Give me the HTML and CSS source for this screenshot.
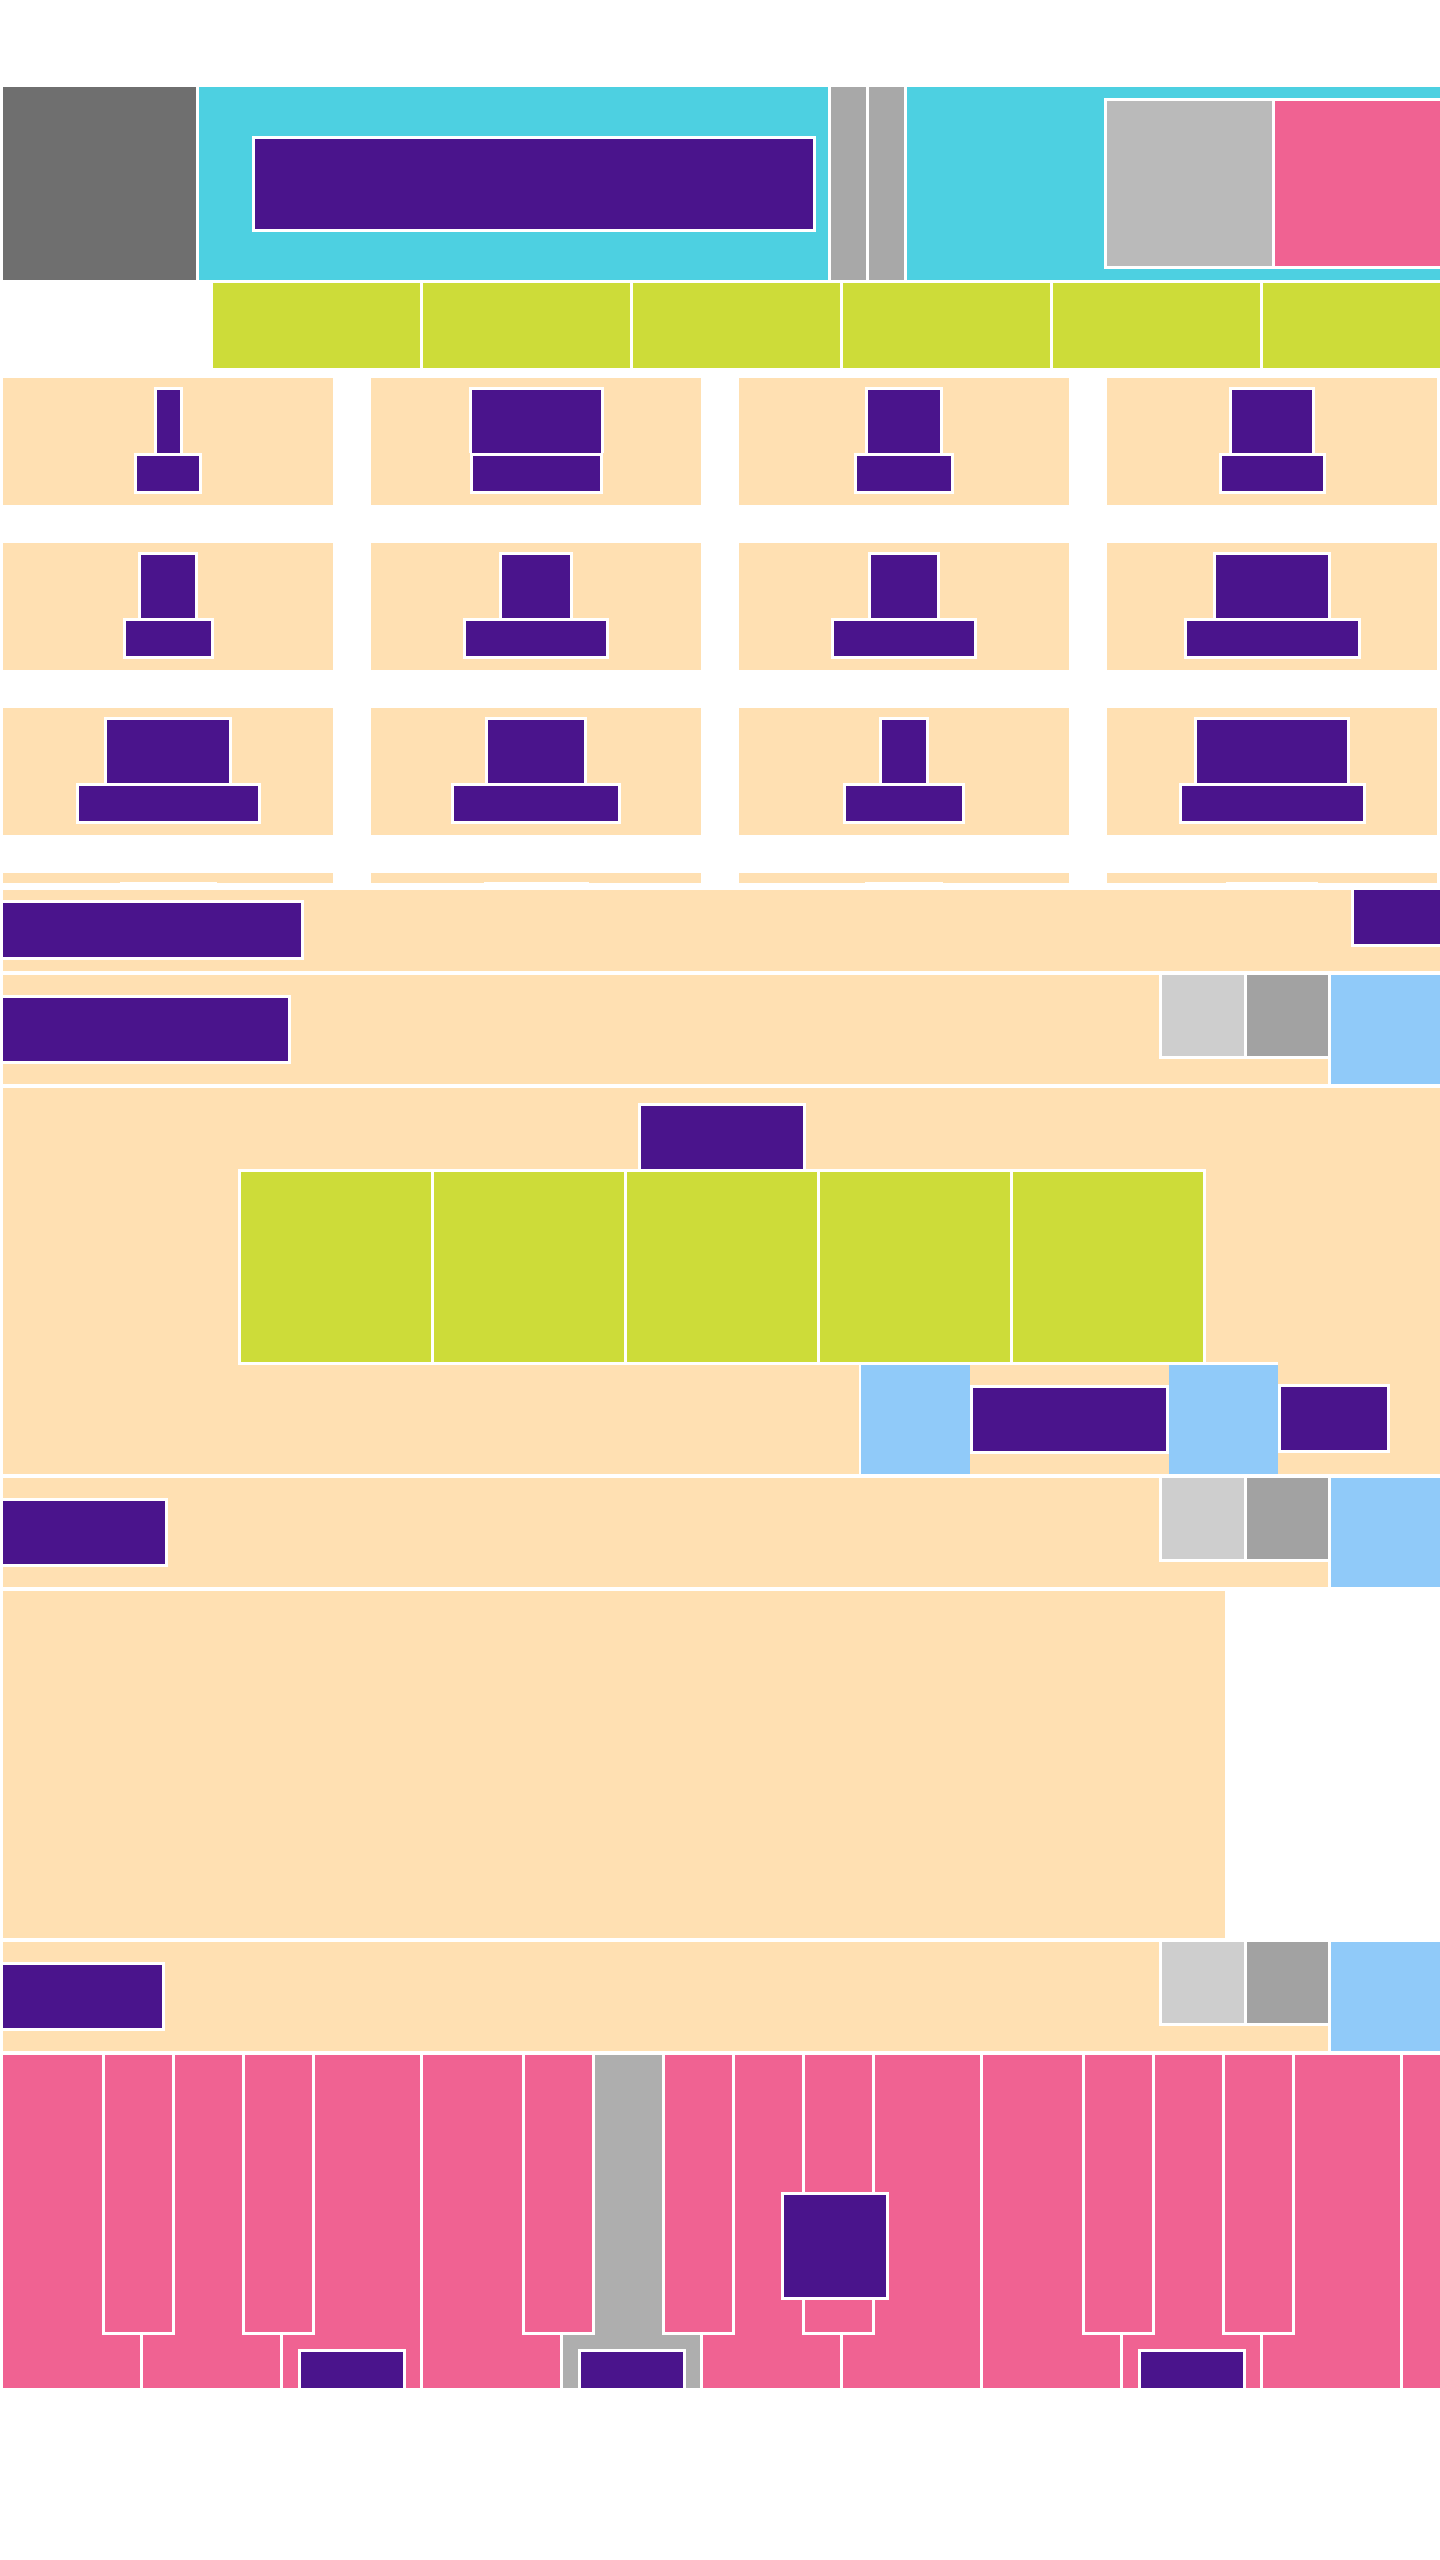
FILE: index.html
```html
<!DOCTYPE html>
<html lang="en">
    <head>
        <meta charset="UTF-8">
        <title>Layout</title>
        <link rel="stylesheet" href="styles.css">
    </head>
    <body>
        <div id="page">
            <div id="topbar">
                <div class="logo"></div>
                <div class="hero"><div class="banner"></div></div>
                <div class="bar"></div>
                <div class="bar"></div>
                <div class="hero hero-side">
                    <div class="inset">
                        <div class="inset-gray"></div>
                        <div class="inset-pink"></div>
                    </div>
                </div>
            </div>
            <ul id="tabs">
                <li></li><li></li><li></li><li></li><li></li><li></li>
            </ul>
            <div id="cards">
                <div class="card"><div class="stem" style="width:29px"></div><div class="base" style="width:68px"></div></div>
                <div class="card"><div class="stem" style="width:135px"></div><div class="base" style="width:133px"></div></div>
                <div class="card"><div class="stem" style="width:78px"></div><div class="base" style="width:100px"></div></div>
                <div class="card"><div class="stem" style="width:86px"></div><div class="base" style="width:107px"></div></div>

                <div class="card"><div class="stem" style="width:60px"></div><div class="base" style="width:91px"></div></div>
                <div class="card"><div class="stem" style="width:74px"></div><div class="base" style="width:146px"></div></div>
                <div class="card"><div class="stem" style="width:72px"></div><div class="base" style="width:146px"></div></div>
                <div class="card"><div class="stem" style="width:118px"></div><div class="base" style="width:177px"></div></div>

                <div class="card"><div class="stem" style="width:128px"></div><div class="base" style="width:185px"></div></div>
                <div class="card"><div class="stem" style="width:102px"></div><div class="base" style="width:170px"></div></div>
                <div class="card"><div class="stem" style="width:50px"></div><div class="base" style="width:122px"></div></div>
                <div class="card"><div class="stem" style="width:156px"></div><div class="base" style="width:187px"></div></div>

                <div class="card"><div class="stem" style="width:97px"></div><div class="base" style="width:130px"></div></div>
                <div class="card"><div class="stem" style="width:105px"></div><div class="base" style="width:150px"></div></div>
                <div class="card"><div class="stem" style="width:78px"></div><div class="base" style="width:110px"></div></div>
                <div class="card"><div class="stem" style="width:92px"></div><div class="base" style="width:120px"></div></div>
            </div>

            <div id="notice">
                <div class="notice-title"></div>
                <div class="notice-btn"></div>
            </div>

            <div class="toolbar">
                <div class="toolbar-body">
                    <div class="toolbar-title" style="width:288px"></div>
                    <div class="toolbar-tools"><div class="tool"></div><div class="tool tool-dark"></div></div>
                </div>
                <div class="toolbar-side"></div>
            </div>

            <div id="stage">
                <div class="stage-cap"></div>
                <ul class="swatches">
                    <li></li><li></li><li></li><li></li><li></li>
                </ul>
                <div class="stage-row">
                    <div class="stage-keys">
                        <div class="stage-blue"></div>
                        <div class="stage-label"></div>
                        <div class="stage-blue"></div>
                    </div>
                    <div class="stage-tag"></div>
                </div>
            </div>

            <div class="toolbar">
                <div class="toolbar-body">
                    <div class="toolbar-title" style="width:165px"></div>
                    <div class="toolbar-tools"><div class="tool"></div><div class="tool tool-dark"></div></div>
                </div>
                <div class="toolbar-side"></div>
            </div>

            <div id="panel"></div>

            <div class="toolbar">
                <div class="toolbar-body">
                    <div class="toolbar-title" style="width:162px"></div>
                    <div class="toolbar-tools"><div class="tool"></div><div class="tool tool-dark"></div></div>
                </div>
                <div class="toolbar-side"></div>
            </div>

            <div id="keyboard">
                <div class="key"></div>
                <div class="key"></div>
                <div class="key"><div class="note"></div></div>
                <div class="key"></div>
                <div class="key pressed"><div class="note"></div></div>
                <div class="key"></div>
                <div class="key"></div>
                <div class="key"></div>
                <div class="key"><div class="note"></div></div>
                <div class="key"></div>
                <div class="key"></div>

                <div class="sharp" style="left:102px"></div>
                <div class="sharp" style="left:242px"></div>
                <div class="sharp" style="left:522px"></div>
                <div class="sharp" style="left:662px"></div>
                <div class="sharp" style="left:802px"></div>
                <div class="sharp" style="left:1082px"></div>
                <div class="sharp" style="left:1222px"></div>

                <div class="note note-float"></div>
            </div>
        </div>
    </body>
</html>
```

FILE: styles.css
```css
*{
    margin: 0;
    padding: 0;
    box-sizing: border-box;
}
ul{
    list-style: none;
}
body{
    font-family: "Liberation Sans", Arial, sans-serif;
    background: #fff;
}
#page{
    width: 1440px;
    overflow: hidden;
    padding-top: 87px;
}

/* top bar */
#topbar{
    display: flex;
    gap: 3px;
    height: 193px;
    padding-left: 3px;
}
#topbar > div{
    flex-shrink: 0;
}
.logo{
    width: 193px;
    background: #6f6f6f;
}
.hero{
    width: 629px;
    background: #4dd0e1;
    display: flex;
    align-items: center;
    padding-left: 53px;
}
.banner{
    width: 564px;
    height: 96px;
    background: #4a148c;
    border: 3px solid #fff;
}
.bar{
    width: 35px;
    background: #a8a8a8;
}
.hero-side{
    width: 540px;
    padding-left: 197px;
}
.inset{
    display: flex;
    flex-shrink: 0;
    gap: 3px;
    height: 171px;
    border: 3px solid #fff;
    background: #fff;
}
.inset-gray{
    width: 165px;
    background: #bababa;
}
.inset-pink{
    width: 200px;
    background: #f06292;
}

/* tabs */
#tabs{
    display: flex;
    gap: 3px;
    height: 85px;
    margin: 3px 0 0 213px;
}
#tabs li{
    flex: 0 0 207px;
    background: #cddc39;
}

/* cards */
#cards{
    display: grid;
    grid-template-columns: repeat(4, 330px);
    grid-auto-rows: 127px;
    gap: 38px;
    height: 505px;
    margin-top: 10px;
    padding-left: 3px;
    overflow: hidden;
}
.card{
    background: #ffe0b2;
    display: flex;
    flex-direction: column;
    align-items: center;
    padding-top: 9px;
}
.stem{
    height: 66px;
    background: #4a148c;
    border: 3px solid #fff;
    border-bottom: 0;
}
.base{
    height: 41px;
    background: #4a148c;
    border: 3px solid #fff;
}

/* notice */
#notice{
    height: 81px;
    margin: 7px 0 0 3px;
    background: #ffe0b2;
    display: flex;
    justify-content: space-between;
    align-items: flex-start;
}
.notice-title{
    width: 301px;
    height: 60px;
    margin-top: 10px;
    background: #4a148c;
    border: 3px solid #fff;
    border-left: 0;
}
.notice-btn{
    width: 89px;
    height: 57px;
    background: #4a148c;
    border: 3px solid #fff;
    border-top: 0;
    border-right: 0;
}

/* toolbars */
.toolbar{
    display: flex;
    gap: 3px;
    height: 109px;
    margin: 4px 0 0 3px;
}
.toolbar-body{
    flex: 0 0 1325px;
    background: #ffe0b2;
    display: flex;
    align-items: center;
    justify-content: space-between;
}
.toolbar-title{
    height: 69px;
    background: #4a148c;
    border: 3px solid #fff;
    border-left: 0;
}
.toolbar-tools{
    align-self: flex-start;
    display: flex;
    gap: 3px;
    height: 84px;
    background: #fff;
    border-left: 3px solid #fff;
    border-bottom: 3px solid #fff;
}
.tool{
    width: 82px;
    background: #cecece;
}
.tool-dark{
    width: 81px;
    background: #a2a2a2;
}
.toolbar-side{
    flex: 0 0 110px;
    background: #90caf9;
}

/* stage */
#stage{
    height: 386px;
    margin: 4px 0 0 3px;
    padding-top: 15px;
    background: #ffe0b2;
    display: flex;
    flex-direction: column;
    align-items: center;
}
.stage-cap{
    width: 168px;
    height: 66px;
    background: #4a148c;
    border: 3px solid #fff;
    border-bottom: 0;
}
.swatches{
    display: flex;
    gap: 3px;
    background: #fff;
    border: 3px solid #fff;
}
.swatches li{
    width: 190px;
    height: 190px;
    background: #cddc39;
}
.stage-row{
    align-self: flex-end;
    margin: -3px 50px 0 0;
    display: flex;
    align-items: center;
}
.stage-keys{
    display: flex;
    height: 112px;
    border-top: 3px solid #fff;
    border-left: 2px solid #fff;
}
.stage-blue{
    width: 109px;
    background: #90caf9;
}
.stage-label{
    align-self: center;
    width: 199px;
    height: 69px;
    background: #4a148c;
    border: 3px solid #fff;
}
.stage-tag{
    width: 112px;
    height: 69px;
    background: #4a148c;
    border: 3px solid #fff;
}

/* big panel */
#panel{
    width: 1222px;
    height: 347px;
    margin: 4px 0 0 3px;
    background: #ffe0b2;
}

/* keyboard */
#keyboard{
    position: relative;
    display: flex;
    gap: 3px;
    height: 333px;
    margin-top: 4px;
    padding-left: 3px;
    overflow: hidden;
}
.key{
    flex: 0 0 137px;
    background: #f06292;
    display: flex;
    justify-content: center;
    align-items: flex-start;
}
.key.pressed{
    background: #aeaeae;
}
.note{
    flex-shrink: 0;
    width: 108px;
    height: 108px;
    margin-top: 294px;
    background: #4a148c;
    border: 3px solid #fff;
}
.sharp{
    position: absolute;
    top: 0;
    width: 73px;
    height: 280px;
    background: #f06292;
    border: 3px solid #fff;
    border-top: 0;
}
.note-float{
    position: absolute;
    left: 781px;
    top: 137px;
    margin-top: 0;
}
```
